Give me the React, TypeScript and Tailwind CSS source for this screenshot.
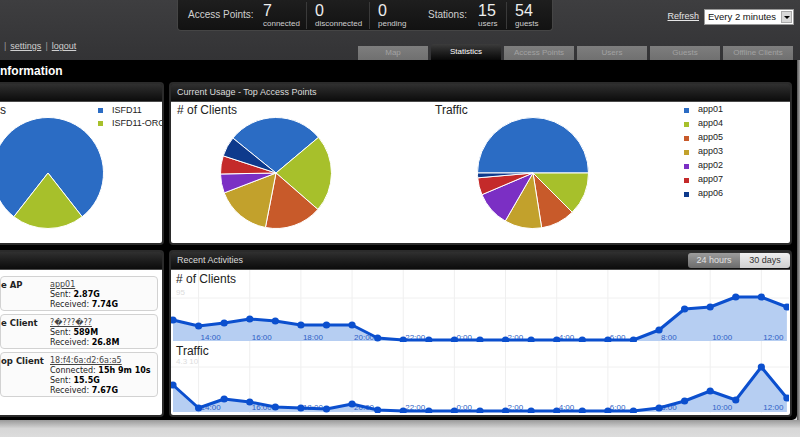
import React from "react";

const BLUE = "#2b6cc4";
const GREEN = "#a7c02b";
const ORANGE = "#c85a2a";
const OLIVE = "#c2a12c";
const PURPLE = "#7b2fc4";
const RED = "#c42a2a";
const NAVY = "#0e3a8c";

type Slice = [number, number, string];

function Pie({ slices }: { slices: Slice[] }) {
  const c = 56;
  const r = 55.5;
  const pt = (a: number) => {
    const rad = (a * Math.PI) / 180;
    return `${(c + r * Math.cos(rad)).toFixed(2)} ${(c + r * Math.sin(rad)).toFixed(2)}`;
  };
  return (
    <svg width="112" height="112" viewBox="0 0 112 112" className="block">
      {slices.map(([a0, a1, col], i) => (
        <path
          key={i}
          d={`M${c} ${c} L${pt(a0)} A${r} ${r} 0 ${a1 - a0 > 180 ? 1 : 0} 1 ${pt(a1)} Z`}
          fill={col}
          stroke="#fff"
          strokeWidth="1"
          strokeLinejoin="round"
        />
      ))}
    </svg>
  );
}

const XS = Array.from({ length: 25 }, (_, i) => 2 + i * 25.58);
const HOURS = ["14:00", "16:00", "18:00", "20:00", "22:00", "0:00", "2:00", "4:00", "6:00", "8:00", "10:00", "12:00"];

const CLIENTS = [320, 326, 323, 319, 321, 325, 325, 325, 338, 340, 340, 340, 340, 340, 340, 340, 340, 340, 340, 330, 309, 307, 297, 297, 307];
const TRAFFIC = [385, 408, 399, 402, 407, 408, 409, 404, 410, 411, 411, 411, 411, 411, 411, 411, 411, 411, 411, 408, 401, 391, 400, 367, 398];

function LineChart(props: {
  title: string;
  data: number[];
  top: number;
  height: number;
  base: number;
  gridY: number;
  valueLabel: string;
  labelY: number;
}) {
  const { title, data, top, height, base, gridY, valueLabel, labelY } = props;
  const pts = data.map((y, i) => [XS[i], y - top] as const);
  const line = pts.map(([x, y], i) => `${i ? "L" : "M"}${x.toFixed(1)} ${y}`).join(" ");
  const b = base - top;
  const area = `${line} L${XS[24].toFixed(1)} ${b} L${XS[0]} ${b} Z`;
  return (
    <div className="relative" style={{ height }}>
      <svg width="618" height={height} className="absolute inset-0">
        {XS.filter((_, i) => i % 2 === 1).map((x, i) => (
          <line key={i} x1={x} x2={x} y1={0} y2={height} stroke="#efefef" strokeWidth="1" />
        ))}
        <line x1={0} x2={618} y1={gridY - top} y2={gridY - top} stroke="#f0f0f0" strokeWidth="1" />
        <text x={5} y={gridY - top - 3} fontSize="8" fill="#dcdcdc" fontFamily="Liberation Sans, sans-serif">
          {valueLabel}
        </text>
        <path d={area} fill="#b6cef2" />
        {HOURS.map((h, i) => (
          <text
            key={h}
            x={XS[i * 2 + 1] + 2}
            y={labelY - top}
            fontSize="8"
            fill="#2f5fc6"
            fontFamily="Liberation Sans, sans-serif"
          >
            {h}
          </text>
        ))}
        <path d={line} fill="none" stroke="#0b4fce" strokeWidth="3" strokeLinejoin="round" />
        {pts.map(([x, y], i) => (
          <circle key={i} cx={x} cy={y} r="3.6" fill="#0b4fce" />
        ))}
      </svg>
      <div className="relative pl-[5px] pt-[2px] text-[12px] leading-[14px] text-[#222]">{title}</div>
    </div>
  );
}

function Panel({
  title,
  right,
  left,
  className,
  children,
}: {
  title: string;
  right?: React.ReactNode;
  left?: boolean;
  className?: string;
  children: React.ReactNode;
}) {
  return (
    <div
      className={`flex flex-col overflow-hidden border-2 border-[#2b2b2b] bg-[#1c1c1c] ${
        left ? "rounded-r-[4px] border-l-0" : "rounded-[4px]"
      } ${className ?? ""}`}
    >
      <div className="flex h-[18px] items-center justify-between border-b border-[#4a4a4a] bg-gradient-to-b from-[#303030] to-[#0c0c0c]">
        <span className="pl-[6px] text-[9px] text-[#dcdcdc]">{title}</span>
        {right}
      </div>
      <div className="flex-1 bg-white">{children}</div>
    </div>
  );
}

function StatGroup({ n, label, className }: { n: string; label: string; className?: string }) {
  return (
    <div className={`flex h-[27px] flex-col ${className ?? ""}`}>
      <span className="text-[16px] leading-[17px] text-[#eee]">{n}</span>
      <span className="text-[8px] leading-[10px] text-[#cfcfcf]">{label}</span>
    </div>
  );
}

function InfoBox({ label, link, rows }: { label: string; link: string; rows: [string, string][] }) {
  return (
    <div className="mr-[4px] flex rounded-[4px] border border-[#d2d2d2] bg-[#fbfbfb] pt-[3px] font-['DejaVu_Sans',sans-serif] text-[8px] leading-[10px] text-[#222]">
      <div className="w-[49px] text-[8.5px] font-bold">{label}</div>
      <div className="flex flex-col">
        <span className="text-[#444] underline">{link}</span>
        {rows.map(([k, v]) => (
          <span key={k}>
            {k} <b className="text-black">{v}</b>
          </span>
        ))}
      </div>
    </div>
  );
}

const TABS = ["Map", "Statistics", "Access Points", "Users", "Guests", "Offline Clients"];

const LEGEND: [string, string][] = [
  ["app01", BLUE],
  ["app04", GREEN],
  ["app05", ORANGE],
  ["app03", OLIVE],
  ["app02", PURPLE],
  ["app07", RED],
  ["app06", NAVY],
];

export default function App() {
  return (
    <div className="h-[437px] w-[800px] overflow-hidden bg-[#d9d9d9] font-['Liberation_Sans',Arial,sans-serif]">
      {/* header */}
      <div className="flex h-[60px] flex-col bg-gradient-to-b from-[#3e3e40] to-[#333335]">
        <div className="flex h-[31px]">
          <div className="ml-[177px] flex h-[31px] w-[376px] items-start rounded-b-[4px] border border-t-0 border-[#454545] bg-gradient-to-b from-[#1e1e1e] to-[#121212] pt-[2px]">
            <span className="ml-[10px] mt-[5px] w-[75px] text-[10px] text-[#d0d0d0]">Access Points:</span>
            <StatGroup n="7" label="connected" className="w-[44px] border-r border-[#3a3a3a]" />
            <StatGroup n="0" label="disconnected" className="w-[63px] border-r border-[#3a3a3a] pl-[8px]" />
            <StatGroup n="0" label="pending" className="w-[58px] pl-[8px]" />
            <span className="mt-[5px] w-[50px] text-[10px] text-[#d0d0d0]">Stations:</span>
            <StatGroup n="15" label="users" className="w-[29px] border-r border-[#3a3a3a]" />
            <StatGroup n="54" label="guests" className="pl-[8px]" />
          </div>
          <div className="ml-auto mr-[6px] mt-[9px] flex h-[16px] items-center gap-[5px]">
            <span className="text-[9px] text-[#e6e6e6] underline">Refresh</span>
            <div className="flex h-[16px] w-[90px] items-center border border-[#999] bg-white pl-[3px] text-[9.5px] text-[#111]">
              <span className="flex-1">Every 2 minutes</span>
              <span className="mr-[1px] flex h-[12px] w-[11px] items-center justify-center border border-[#aaa] bg-[#d8d8d8]">
                <span className="h-0 w-0 border-x-[3px] border-t-[3px] border-x-transparent border-t-black" />
              </span>
            </div>
          </div>
        </div>
        <div className="flex flex-1 items-end justify-between">
          <div className="mb-[9px] flex items-center gap-[4px] pl-[4px] text-[9px] leading-[10px] text-[#cfcfcf]">
            <span className="text-[#999]">|</span>
            <span className="underline">settings</span>
            <span className="text-[#999]">|</span>
            <span className="underline">logout</span>
          </div>
          <div className="mr-[7px] flex items-end gap-[3px]">
            {TABS.map((t) =>
              t === "Statistics" ? (
                <div
                  key={t}
                  className="flex h-[16px] w-[70px] items-center justify-center rounded-t-[3px] bg-gradient-to-b from-[#3c3c3c] to-[#080808] text-[8px] text-white"
                >
                  {t}
                </div>
              ) : (
                <div
                  key={t}
                  className="flex h-[14px] w-[70px] items-center justify-center bg-gradient-to-b from-[#7e7e7e] to-[#707070] text-[8px] text-[#a2a2a2]"
                >
                  {t}
                </div>
              )
            )}
          </div>
        </div>
      </div>

      {/* main */}
      <div className="flex h-[360px]">
        <div className="flex w-[797px] flex-col rounded-br-[5px] bg-black pr-[5px]">
          <div className="h-[22px] text-[12px] font-bold leading-[22px] text-white">nformation</div>
          <div className="grid grid-cols-[164px_623px] grid-rows-[163px_167px] gap-x-[5px] gap-y-[5px]">
            <Panel title="" left>
              <div className="flex">
                <div className="w-[98px]">
                  <div className="pt-[1px] text-[12px] leading-[14px] text-[#222]">s</div>
                  <div className="-ml-[8px]">
                    <Pie slices={[[128, 412, BLUE], [52, 128, GREEN]]} />
                  </div>
                </div>
                <div className="flex flex-col pt-[2px] text-[9px] text-[#222]">
                  {[
                    ["ISFD11", BLUE],
                    ["ISFD11-ORG", GREEN],
                  ].map(([n, c]) => (
                    <div key={n} className="flex h-[13px] items-center whitespace-nowrap">
                      <span className="h-[5px] w-[5px]" style={{ background: c }} />
                      <span className="ml-[9px]">{n}</span>
                    </div>
                  ))}
                </div>
              </div>
            </Panel>

            <Panel title="Current Usage - Top Access Points">
              <div className="flex">
                <div className="w-[264px] pl-[6px]">
                  <div className="pt-[1px] text-[12px] leading-[14px] text-[#222]">
                    # of Clients
                  </div>
                  <div className="ml-[43px]">
                    <Pie
                      slices={[
                        [219, 320, BLUE],
                        [320, 401, GREEN],
                        [41, 101, ORANGE],
                        [101, 159, OLIVE],
                        [159, 179, PURPLE],
                        [179, 198, RED],
                        [198, 219, NAVY],
                      ]}
                    />
                  </div>
                </div>
                <div className="w-[247px]">
                  <div className="pt-[1px] text-[12px] leading-[14px] text-[#222]">Traffic</div>
                  <div className="ml-[42px]">
                    <Pie
                      slices={[
                        [180, 360, BLUE],
                        [0, 45, GREEN],
                        [45, 81, ORANGE],
                        [81, 120, OLIVE],
                        [120, 157, PURPLE],
                        [157, 175, RED],
                        [175, 180, NAVY],
                      ]}
                    />
                  </div>
                </div>
                <div className="flex flex-col pt-[1px] text-[9px] text-[#222]">
                  {LEGEND.map(([n, c]) => (
                    <div key={n} className="flex h-[14px] items-center pl-[2px]">
                      <span className="h-[5px] w-[5px]" style={{ background: c }} />
                      <span className="ml-[9px]">{n}</span>
                    </div>
                  ))}
                </div>
              </div>
            </Panel>

            <Panel title="" left>
              <div className="flex flex-col gap-[3px] pt-[6px]">
                <InfoBox label="e AP" link="app01" rows={[["Sent:", "2.87G"], ["Received:", "7.74G"]]} />
                <InfoBox label="e Client" link="?�???�??" rows={[["Sent:", "589M"], ["Received:", "26.8M"]]} />
                <InfoBox
                  label="op Client"
                  link="18:f4:6a:d2:6a:a5"
                  rows={[
                    ["Connected:", "15h 9m 10s"],
                    ["Sent:", "15.5G"],
                    ["Received:", "7.67G"],
                  ]}
                />
              </div>
            </Panel>

            <Panel
              title="Recent Activities"
              right={
                <div className="flex h-[15px] overflow-hidden rounded-[3px] text-[9px]">
                  <span className="flex w-[52px] items-center justify-center bg-gradient-to-b from-[#9c9c9c] to-[#6c6c6c] text-[#e2e2e2]">
                    24 hours
                  </span>
                  <span className="flex w-[50px] items-center justify-center bg-gradient-to-b from-[#f0f0f0] to-[#d0d0d0] text-[#333]">
                    30 days
                  </span>
                </div>
              }
            >
              <LineChart
                title="# of Clients"
                data={CLIENTS}
                top={270}
                height={72}
                base={341}
                gridY={298}
                valueLabel="95"
                labelY={340}
              />
              <LineChart
                title="Traffic"
                data={TRAFFIC}
                top={342}
                height={71}
                base={412}
                gridY={367}
                valueLabel="4.3 10"
                labelY={410}
              />
            </Panel>
          </div>
        </div>
        <div className="w-[3px] bg-gradient-to-r from-[#555] to-[#a8a8a8]" />
      </div>
      <div className="h-[17px] bg-gradient-to-b from-[#9a9a9a] via-[#d6d6d6] to-[#dcdcdc]" />
    </div>
  );
}
